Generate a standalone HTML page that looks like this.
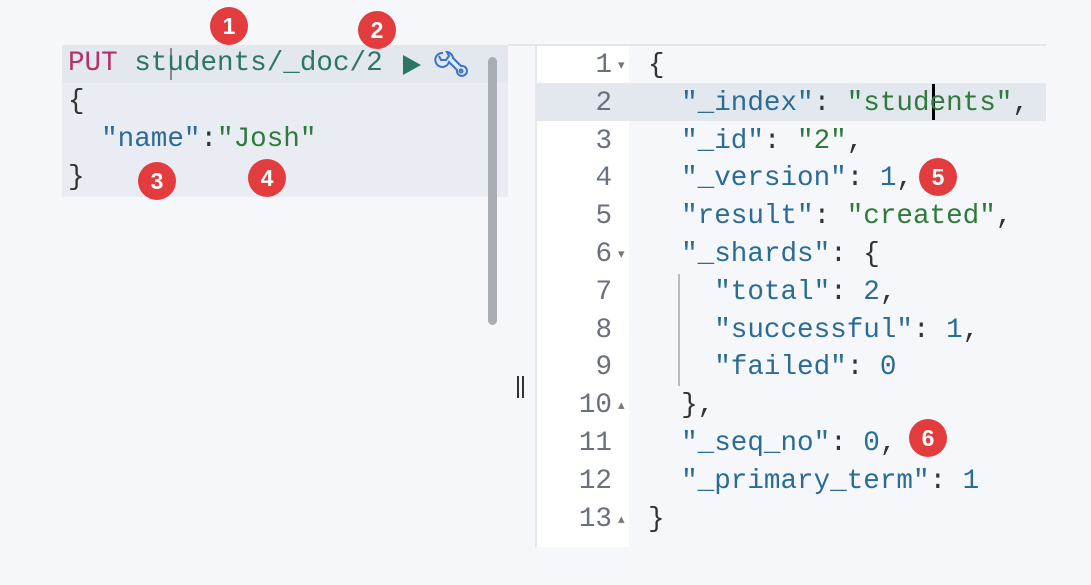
<!DOCTYPE html>
<html><head><style>
body{margin:0;width:1091px;height:585px;background:#f5f7fa;position:relative;overflow:hidden;font-family:"Liberation Mono",monospace;font-size:27.6px}
.a{position:absolute}
.ln{position:absolute;height:38px;line-height:38px;white-space:pre}
.k{color:#2b6c95}.s{color:#2f7a3a}.n{color:#2b6c95}.p{color:#333}.put{color:#b5306a}.u{color:#2c7664}
.g{color:#6a717c}
.b{position:absolute;width:38px;height:38px;border-radius:50%;background:#e23c3f;color:#fff;font:bold 23px/38px "Liberation Sans",sans-serif;text-align:center}
</style></head><body>
<div class="a" style="left:62px;top:45px;width:446px;height:38px;background:#e3e7ee"></div>
<div class="a" style="left:62px;top:83px;width:446px;height:114px;background:#e9ecf2"></div>
<div class="a" style="left:488px;top:57px;width:9px;height:268px;border-radius:5px;background:#a9adb4"></div>
<div class="a" style="left:170px;top:48px;width:2px;height:32px;background:#888"></div>
<div class="ln" style="left:68px;top:45px"><span class="put">PUT</span> <span class="u">students/_doc/2</span></div>
<svg class="a" style="left:400px;top:52px" width="24" height="26"><path d="M3 3 L21 13 L3 23Z" fill="#2c7664"/></svg>
<svg class="a" style="left:434px;top:50px" width="36" height="32" fill="none" stroke="#3a73c4" stroke-width="2"><path d="M9 3 A7 7 0 1 0 15 12 L23 20 A5 5 0 1 0 27 16 L19 8 A7 7 0 0 0 13 2 L15 6 12 10 7 10 5 6"/><circle cx="27" cy="21" r="1.5"/></svg>
<div class="ln p" style="left:68px;top:83px">{</div>
<div class="ln" style="left:68px;top:121px">  <span class="k">"name"</span><span class="p">:</span><span class="s">"Josh"</span></div>
<div class="ln p" style="left:68px;top:159px">}</div>

<div class="a" style="left:508px;top:44px;width:538px;height:2px;background:#e2e5ea"></div>
<div class="a" style="left:535px;top:46px;width:2px;height:501px;background:#e4e7ec"></div>
<div class="a" style="left:537px;top:46px;width:92px;height:501px;background:#fff"></div>
<div class="a" style="left:537px;top:83px;width:509px;height:38px;background:#e3e7ee"></div>
<div class="a" style="left:932px;top:84px;width:3px;height:36px;background:#000"></div>
<div class="a" style="left:517px;top:376px;width:2px;height:22px;background:#333"></div>
<div class="a" style="left:522px;top:376px;width:2px;height:22px;background:#333"></div>
<div class="a" style="left:678px;top:274px;width:2px;height:112px;background:#bbb"></div>

<div class="a g" style="left:560px;top:47px;width:52px;text-align:right;line-height:37.8px">1<br>2<br>3<br>4<br>5<br>6<br>7<br>8<br>9<br>10<br>11<br>12<br>13</div>
<div class="a" style="left:618px;top:47px;font-size:13px;line-height:37.8px;color:#777;font-family:'DejaVu Sans',sans-serif">▾<br><br><br><br><br>▾<br><br><br><br>▴<br><br><br>▴</div>
<div class="a" style="left:648px;top:47px;line-height:37.8px;white-space:pre"><span class="p">{</span>
  <span class="k">"_index"</span><span class="p">: </span><span class="s">"students"</span><span class="p">,</span>
  <span class="k">"_id"</span><span class="p">: </span><span class="s">"2"</span><span class="p">,</span>
  <span class="k">"_version"</span><span class="p">: </span><span class="n">1</span><span class="p">,</span>
  <span class="k">"result"</span><span class="p">: </span><span class="s">"created"</span><span class="p">,</span>
  <span class="k">"_shards"</span><span class="p">: {</span>
    <span class="k">"total"</span><span class="p">: </span><span class="n">2</span><span class="p">,</span>
    <span class="k">"successful"</span><span class="p">: </span><span class="n">1</span><span class="p">,</span>
    <span class="k">"failed"</span><span class="p">: </span><span class="n">0</span>
  <span class="p">},</span>
  <span class="k">"_seq_no"</span><span class="p">: </span><span class="n">0</span><span class="p">,</span>
  <span class="k">"_primary_term"</span><span class="p">: </span><span class="n">1</span>
<span class="p">}</span></div>

<div class="b" style="left:210px;top:7px">1</div>
<div class="b" style="left:358px;top:11px">2</div>
<div class="b" style="left:138px;top:162px">3</div>
<div class="b" style="left:248px;top:159px">4</div>
<div class="b" style="left:919px;top:158px">5</div>
<div class="b" style="left:909px;top:419px">6</div>
</body></html>
